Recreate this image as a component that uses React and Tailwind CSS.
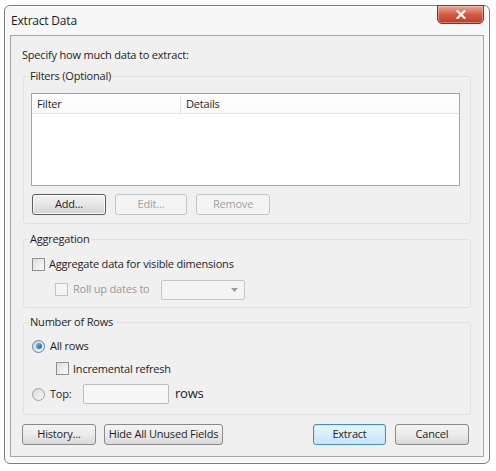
import React, { useState } from "react";

const font = { fontFamily: '"Open Sans", "Noto Sans", sans-serif' };

// Win7 style push button
const Button = ({ children, width, variant = "normal" }) => {
  const base =
    "h-[21px] flex items-center justify-center rounded-[3px] border text-[11px] tracking-[-0.2px] shrink-0";
  const styles = {
    normal:
      "border-[#8a8a8a] bg-gradient-to-b from-[#f4f4f4] via-[#ebebeb] to-[#d9d9d9] text-[#1e1e1e]",
    focused:
      "border-[#5c5c5c] bg-gradient-to-b from-[#f2f2f2] via-[#e6e6e6] to-[#d2d2d2] text-[#1e1e1e] shadow-[inset_0_0_0_1px_#fbfbfb]",
    disabled: "border-[#c2c5c8] bg-[#f4f4f4] text-[#a0a0a0]",
    primary:
      "border-[#3d8ec4] bg-gradient-to-b from-[#e8f5fc] via-[#d9eefb] to-[#c3e3f7] text-[#1e1e1e] shadow-[inset_0_0_0_1px_#cdeafb]",
  };
  return (
    <div className={`${base} ${styles[variant]} ${width}`}>{children}</div>
  );
};

const Checkbox = ({ disabled = false, checked = false, onChange }) => (
  <div
    onClick={onChange}
    className={`w-[13px] h-[13px] shrink-0 border flex items-center justify-center ${
      disabled
        ? "border-[#c4c4c4] bg-[#f4f4f4]"
        : "border-[#8f8f8f] bg-gradient-to-br from-[#dcdcdc] to-[#fbfbfb]"
    }`}
  >
    {checked && (
      <svg width="9" height="9" viewBox="0 0 9 9">
        <path d="M1 4.5 L3.5 7 L8 1.5" stroke="#333" strokeWidth="1.5" fill="none" />
      </svg>
    )}
  </div>
);

const Radio = ({ checked }) => (
  <div
    className={`w-[13px] h-[13px] shrink-0 rounded-full border flex items-center justify-center ${
      checked
        ? "border-[#5f84a6] bg-gradient-to-br from-[#c9d4de] to-[#f5f7f9]"
        : "border-[#9aa0a6] bg-gradient-to-br from-[#d8d8d8] to-[#f8f8f8]"
    }`}
  >
    {checked && (
      <div className="w-[6px] h-[6px] rounded-full bg-gradient-to-br from-[#7fc2ea] to-[#1a5a98]" />
    )}
  </div>
);

// group box: legend sits on the top border like a Windows frame
const GroupBox = ({ label, className, children }) => (
  <fieldset
    className={`border border-[#e1e1e1] rounded-[3px] px-[8px] ${className}`}
  >
    <legend className="-ml-[3px] px-[1px] text-[11px] leading-[14px] tracking-[-0.2px] text-[#1e1e1e]">
      {label}
    </legend>
    {children}
  </fieldset>
);

export default function App() {
  const [aggregate, setAggregate] = useState(false);
  const [incremental, setIncremental] = useState(false);

  return (
    <div className="w-[496px] h-[471px] bg-white pt-[5px] pl-[4px]" style={font}>
      {/* window frame */}
      <div className="w-[486px] h-[459px] rounded-[6px] border border-[#7b7b7b] bg-[#f7f7f7] flex flex-col shadow-[inset_0_0_0_1px_#ffffff]">
        {/* title bar */}
        <div className="h-[29px] flex items-start justify-between pl-[6px] pr-[5px] shrink-0">
          <div className="text-[12px] text-[#1a1a1a] mt-[6px] tracking-[-0.2px]">
            Extract Data
          </div>
          <div className="w-[47px] h-[19px] -mt-[1px] rounded-b-[5px] border border-[#8c2e25] bg-gradient-to-b from-[#e9a795] via-[#d45b42] to-[#c03a24] flex items-center justify-center shadow-[inset_0_0_0_1px_rgba(255,255,255,0.35)]">
            <svg width="10" height="9" viewBox="0 0 10 9">
              <path
                d="M1.5 1 L8.5 8 M8.5 1 L1.5 8"
                stroke="#ffffff"
                strokeWidth="2.2"
                strokeLinecap="square"
              />
            </svg>
          </div>
        </div>

        {/* client area */}
        <div className="mx-[5px] h-[422px] border border-[#a7a7a7] bg-[#f0f0f0] flex flex-col px-[12px] text-[#1e1e1e]">
          <div className="mt-[12px] -ml-[1px] text-[11px] leading-[14px] tracking-[-0.2px]">
            Specify how much data to extract:
          </div>

          {/* Filters */}
          <GroupBox label="Filters (Optional)" className="mt-[7px] h-[155px] pt-[10px]">
            <div className="-ml-[1px] w-[429px] h-[93px] border border-[#a5a5a5] bg-white flex flex-col">
              <div className="h-[20px] flex border-b border-[#e6e6e6] text-[11px] tracking-[-0.2px] pt-[2px] bg-gradient-to-b from-white to-[#fafafa]">
                <div className="w-[149px] pl-[5px] flex items-center border-r border-[#e3e3e3]">
                  Filter
                </div>
                <div className="pl-[5px] flex items-center">Details</div>
              </div>
            </div>
            <div className="flex gap-[9px] mt-[8px]">
              <Button width="w-[74px]" variant="focused">
                Add...
              </Button>
              <Button width="w-[72px]" variant="disabled">
                Edit...
              </Button>
              <Button width="w-[74px]" variant="disabled">
                Remove
              </Button>
            </div>
          </GroupBox>

          {/* Aggregation */}
          <GroupBox label="Aggregation" className="mt-[8px] h-[76px] pt-[10px]">
            <div className="flex items-center gap-[4px] text-[11px] tracking-[-0.2px]">
              <Checkbox checked={aggregate} onChange={() => setAggregate(!aggregate)} />
              <span>Aggregate data for visible dimensions</span>
            </div>
            <div className="flex items-center ml-[23px] mt-[7px] text-[11px] tracking-[-0.2px] text-[#9a9a9a]">
              <Checkbox disabled />
              <span className="ml-[5px] w-[88px]">Roll up dates to</span>
              <div className="w-[84px] h-[20px] border border-[#c6c6c6] rounded-[2px] bg-[#f4f4f4] flex items-center justify-end pr-[6px]">
                <svg width="7" height="4" viewBox="0 0 7 4">
                  <path d="M0 0 L7 0 L3.5 4 Z" fill="#9a9a9a" />
                </svg>
              </div>
            </div>
          </GroupBox>

          {/* Number of Rows */}
          <GroupBox label="Number of Rows" className="mt-[7px] h-[100px] pt-[9px]">
            <div className="flex items-center gap-[5px] text-[11px] tracking-[-0.2px]">
              <Radio checked />
              <span>All rows</span>
            </div>
            <div className="flex items-center gap-[4px] ml-[24px] mt-[6px] text-[11px] tracking-[-0.2px]">
              <Checkbox checked={incremental} onChange={() => setIncremental(!incremental)} />
              <span>Incremental refresh</span>
            </div>
            <div className="flex items-center mt-[7px] text-[11px] tracking-[-0.2px]">
              <Radio />
              <span className="ml-[5px] w-[33px]">Top:</span>
              <div className="w-[86px] h-[20px] border border-[#bdbdbd] rounded-[2px] bg-[#f7f7f7]" />
              <span className="ml-[6px] text-[13px]">rows</span>
            </div>
          </GroupBox>

          {/* bottom buttons */}
          <div className="flex items-center mt-[9px] -ml-[1px]">
            <Button width="w-[74px]">History...</Button>
            <Button width="w-[119px] ml-[8px]">Hide All Unused Fields</Button>
            <Button width="w-[73px] ml-[90px]" variant="primary">
              Extract
            </Button>
            <Button width="w-[74px] ml-[9px]">Cancel</Button>
          </div>
        </div>
      </div>
    </div>
  );
}
